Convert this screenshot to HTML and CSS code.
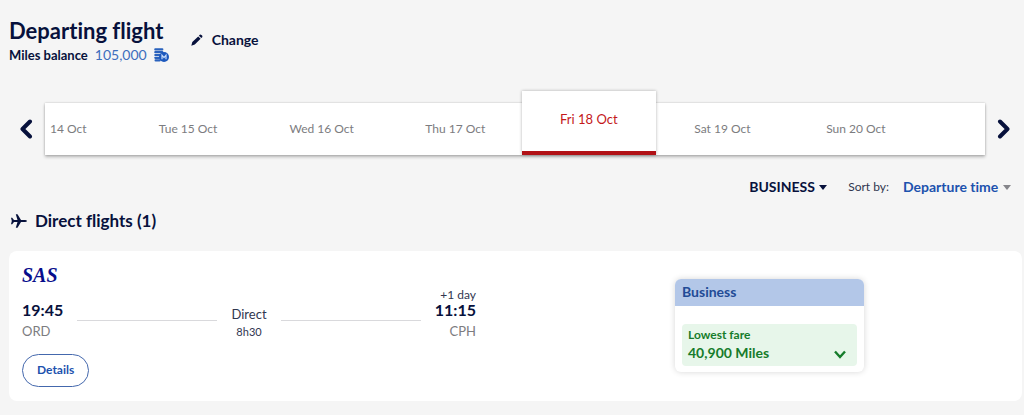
FILE: index.html
```html
<!DOCTYPE html>
<html lang="en">
<head>
  <meta charset="utf-8" />
  <meta name="viewport" content="width=device-width, initial-scale=1" />
  <title>Departing flight</title>
  <link rel="stylesheet" href="styles.css">
</head>
<body>
  <header class="page-header">
    <div class="heading">
      <h1 class="title">Departing flight</h1>
      <p class="balance">
        <strong>Miles balance</strong>
        <span class="miles">105,000</span>
        <svg class="coins" viewBox="0 0 15 14" width="15" height="14" aria-hidden="true">
          <path d="M1.300 1.400h7M1.300 4.200h7M1.300 7h5M1.300 9.800h4M1.600 12.400h4" stroke="#2a62bd" stroke-width="2.200" stroke-linecap="round" />
          <circle cx="10" cy="9" r="5" fill="#1c58bd" />
          <path d="M8 11.200V7.200l2 2.400 2-2.400v4" fill="none" stroke="#c6dafa" stroke-width="1.200" />
        </svg>
      </p>
    </div>
    <button class="change" type="button">
      <svg viewBox="0 0 12 12" width="12" height="12" aria-hidden="true">
        <path d="M0.300 11.700l1-3.600 5.900-5.700 2.400 2.400-5.800 5.800zM7.900 1.700l.9-.9q.8-.6 1.600.1l.7.7q.7.8.1 1.600l-.9.9z" fill="currentColor" />
      </svg>
      Change
    </button>
  </header>

  <nav class="dates" aria-label="Departure date">
    <button class="arrow" type="button" aria-label="Earlier dates">
      <svg viewBox="0 0 14 20" width="14" height="20"><path d="M11 2.500L3.500 10L11 17.500" /></svg>
    </button>
    <div class="date-strip">
      <button class="date first" type="button">14 Oct</button>
      <button class="date" type="button">Tue 15 Oct</button>
      <button class="date" type="button">Wed 16 Oct</button>
      <button class="date" type="button">Thu 17 Oct</button>
      <button class="date active" type="button" aria-current="date">Fri 18 Oct</button>
      <button class="date" type="button">Sat 19 Oct</button>
      <button class="date" type="button">Sun 20 Oct</button>
    </div>
    <button class="arrow" type="button" aria-label="Later dates">
      <svg viewBox="0 0 14 20" width="14" height="20"><path d="M3 2.500L10.500 10L3 17.500" /></svg>
    </button>
  </nav>

  <div class="filters">
    <div class="dropdown">
      <select class="cabin" aria-label="Cabin">
        <option>BUSINESS</option>
      </select>
      <svg viewBox="0 0 8 5" width="8" height="5" aria-hidden="true"><path d="M0 0h8L4 5z" fill="#07113c" /></svg>
    </div>
    <label class="sort-label" for="sort">Sort by:</label>
    <div class="dropdown">
      <select class="sort" id="sort">
        <option>Departure time</option>
      </select>
      <svg viewBox="0 0 8 5" width="8" height="5" aria-hidden="true"><path d="M0 0h8L4 5z" fill="#85858a" /></svg>
    </div>
  </div>

  <main>
    <h2 class="section-title">
      <svg viewBox="0 0 16 14" width="16" height="14" aria-hidden="true">
        <path d="M0 3.800h1.200L3 6h3.500L4.800 .3h1.700L10 6h4q1.800.2 2 1-.2.800-2 1h-4l-3.500 5.700H4.800L6.500 8H3l-1.800 2.200H0L.8 7z" fill="currentColor" />
      </svg>
      Direct flights (1)
    </h2>

    <article class="flight">
      <div class="journey">
        <div class="airline">SAS</div>
        <div class="route">
          <div class="stop">
            <span class="time">19:45</span>
            <span class="airport">ORD</span>
          </div>
          <span class="line"></span>
          <div class="duration">
            <span class="direct">Direct</span>
            <span class="length">8h30</span>
          </div>
          <span class="line"></span>
          <div class="stop arrival">
            <span class="day">+1 day</span>
            <span class="time">11:15</span>
            <span class="airport">CPH</span>
          </div>
        </div>
        <button class="details" type="button">Details</button>
      </div>

      <section class="fare">
        <h3 class="fare-cabin">Business</h3>
        <button class="fare-option" type="button">
          <span class="fare-text">
            <span class="fare-label">Lowest fare</span>
            <span class="fare-price">40,900 Miles</span>
          </span>
          <svg viewBox="0 0 12 9" width="12" height="9" aria-hidden="true"><path d="M1 1.500l5 5.500 5-5.500" fill="none" stroke="currentColor" stroke-width="2.400" /></svg>
        </button>
      </section>
    </article>
  </main>
</body>
</html>
```
FILE: styles.css
```css
:root {
  --bg: #f5f5f5;
  --navy: #07113c;
  --blue: #1c52ae;
  --grey: #7c7c80;
  --red: #c4181b;
  --green: #167c2b;
}
* { box-sizing: border-box; }
body {
  margin: 0;
  padding: 18px 2px 14px 9px;
  font-family: Lato, "Open Sans", sans-serif;
  font-size: 13px;
  line-height: 16px;
  font-variant-ligatures: none;
  color: var(--navy);
  background: var(--bg);
}
h1, h2, h3, p { margin: 0; }
button, select {
  font: inherit;
  font-variant-ligatures: none;
  color: inherit;
  background: none;
  border: 0;
  padding: 0;
  cursor: pointer;
}

/* header */
.page-header { display: flex; align-items: center; gap: 22px; }
.title { font-size: 22px; line-height: 26px; font-weight: 700; }
.balance { display: flex; align-items: center; gap: 7px; margin-top: 3px; }
.miles { color: #3d6ebd; font-size: 14px; }
.change {
  display: flex; align-items: center; gap: 9px;
  padding-bottom: 2px;
  font-size: 14px; font-weight: 700;
}

/* date strip */
.dates {
  display: flex; align-items: center; gap: 12px;
  margin-top: 40px;
  padding: 0 11px 0 10px;
}
.arrow { flex: none; display: flex; }
.arrow path { fill: none; stroke: var(--navy); stroke-width: 4; stroke-linecap: round; stroke-linejoin: round; }
.date-strip {
  flex: 1;
  display: grid;
  grid-template-columns: 76fr repeat(6, 133fr) 62fr;
  height: 52px;
  background: #fff;
  box-shadow: 0 0 2px rgba(0,0,0,0.2), 0 2px 3px rgba(0,0,0,0.25);
}
.date { color: var(--grey); font-size: 12px; }
.date.first { text-align: left; padding-left: 5px; }
.date.active {
  margin-top: -12px;
  padding-bottom: 4px;
  font-size: 13px;
  color: var(--red);
  background: #fff;
  border-bottom: 4px solid #b11116;
  box-shadow: 0 0 3px rgba(0,0,0,0.3);
}

/* cabin and sort order */
.filters {
  display: flex; align-items: center; justify-content: flex-end;
  margin-top: 24px;
  padding-right: 11px;
}
.dropdown { display: flex; align-items: center; gap: 4px; }
.dropdown svg { pointer-events: none; }
.dropdown select { appearance: none; font-size: 14px; font-weight: 700; }
.sort { color: var(--blue); }
.sort-label { margin: 0 14px 0 21px; font-size: 12px; color: #30364f; }

/* results */
.section-title {
  display: flex; align-items: center; gap: 8px;
  margin: 16px 0 20px 2px;
  font-size: 17px; line-height: 20px; font-weight: 700;
}
.flight {
  display: grid;
  grid-template-columns: 454fr 199fr 189fr 145fr;
  align-items: start;
  padding: 14px 13px;
  background: #fff;
  border-radius: 8px;
}
.airline {
  font-family: "Liberation Serif", serif;
  font-size: 20px; line-height: 20px; font-weight: 700; font-style: italic;
  color: #070d8c;
}
.route { display: flex; align-items: flex-end; gap: 14px; margin-top: 3px; }
.stop, .duration { display: flex; flex-direction: column; }
.time { font-size: 16px; line-height: 16px; font-weight: 700; }
.airport { margin-top: 4px; font-size: 13px; line-height: 18px; color: var(--grey); }
.arrival { align-items: flex-end; }
.day { font-size: 12px; line-height: 14px; color: #30364f; }
.duration { align-items: center; color: #30364f; }
.direct { font-size: 13px; line-height: 18px; }
.length { font-size: 11px; line-height: 17px; }
.line { flex: 1; height: 1px; margin-bottom: 19px; background: #d9d9dc; }
.details {
  margin-top: 14px;
  padding: 7px 14px 8px;
  font-size: 12px; font-weight: 700;
  color: var(--blue);
  border: 1px solid #4468ad;
  border-radius: 17px;
}

.fare {
  grid-column: 3;
  margin-top: 14px;
  border-radius: 6px;
  overflow: hidden;
  box-shadow: 0 0 6px rgba(0,0,0,0.16);
}
.fare-cabin {
  padding: 4px 7px 6px;
  font-size: 14px; line-height: 17px; font-weight: 700;
  color: #224b96;
  background: #b3c7e8;
}
.fare-option {
  display: flex; align-items: flex-end; justify-content: space-between;
  width: calc(100% - 14px);
  margin: 18px 7px 6px;
  padding: 2px 11px 4px 6px;
  text-align: left;
  font-weight: 700;
  color: var(--green);
  background: #e7f6ea;
  border-radius: 4px;
}
.fare-text { display: flex; flex-direction: column; }
.fare-label { font-size: 12px; line-height: 18px; }
.fare-price { font-size: 14px; line-height: 18px; }
.fare-option svg { margin-bottom: 3px; }
```
